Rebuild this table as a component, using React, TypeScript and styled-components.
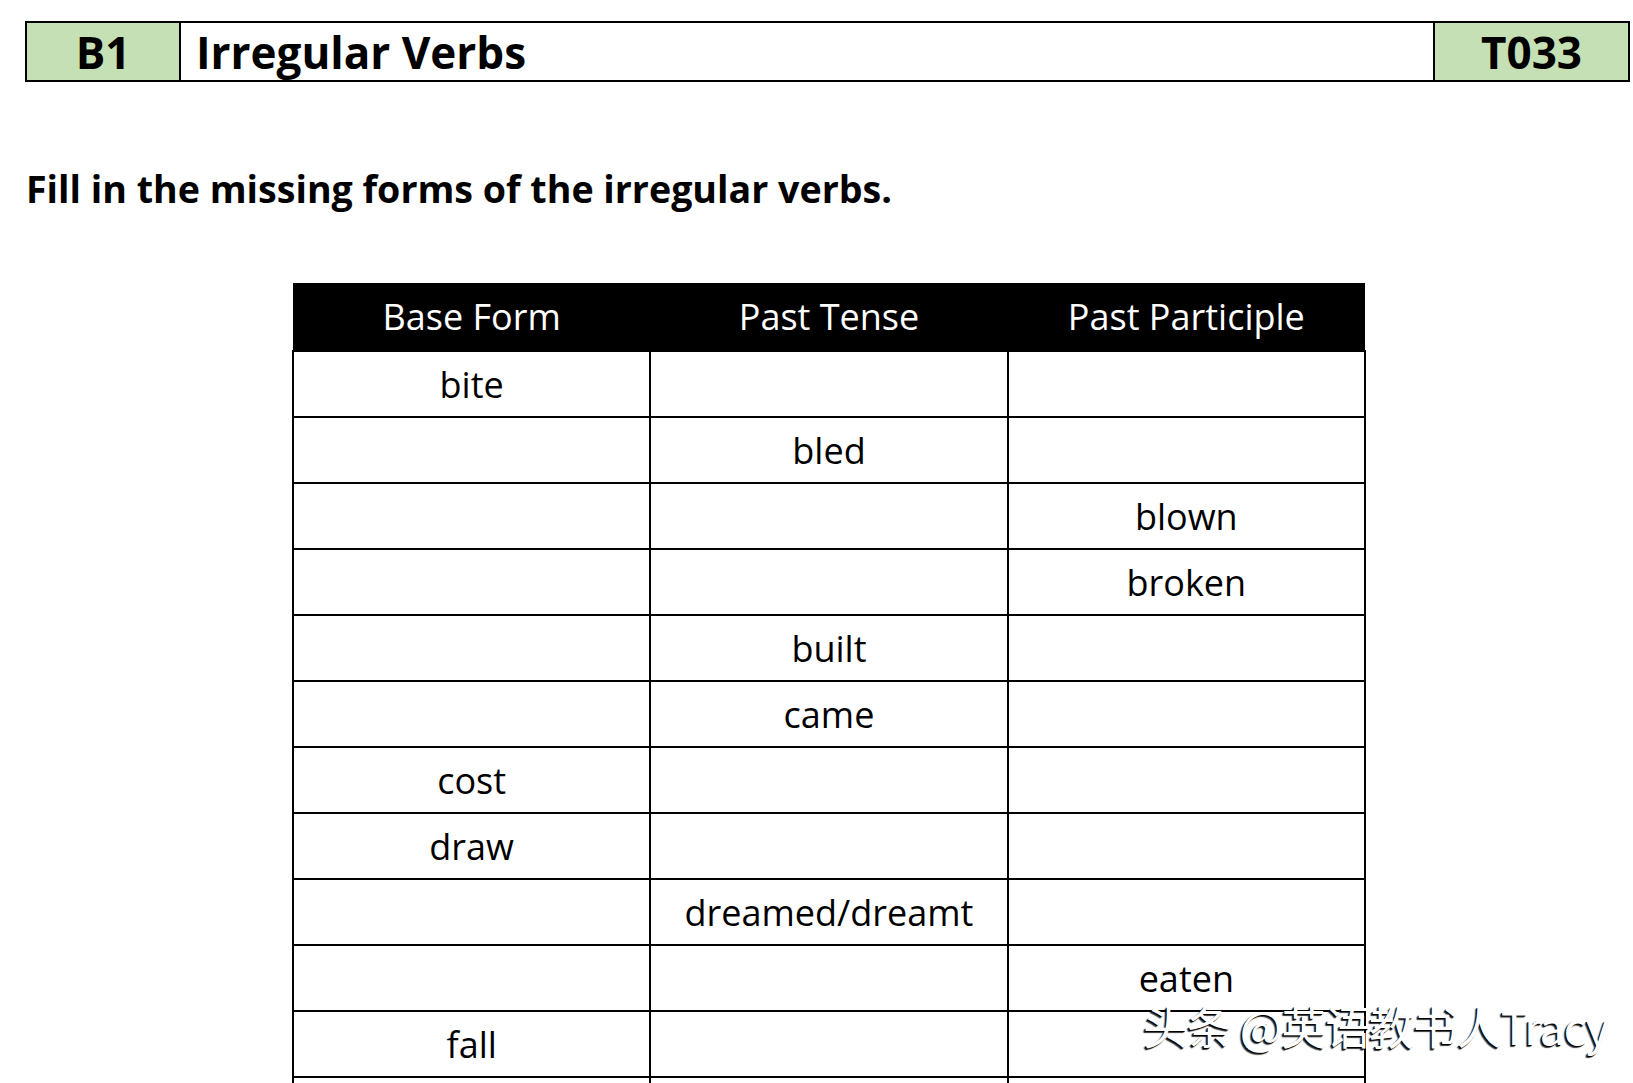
import React from 'react'
import styled, { createGlobalStyle } from 'styled-components'

const GlobalStyle = createGlobalStyle`
  html, body {
    margin: 0;
    padding: 0;
    background: #ffffff;
    overflow: hidden;
  }
  body {
    font-family: 'Open Sans', 'Noto Sans', sans-serif;
    color: #000000;
  }
`

const Page = styled.div`
  position: relative;
  width: 1633px;
  height: 1083px;
  padding: 21px 3px 0 25px;
  box-sizing: border-box;
  overflow: hidden;
`

const TitleBar = styled.div`
  display: grid;
  grid-template-columns: 152px 1fr 195px;
  height: 61px;
  border: 2px solid #000;
  box-sizing: border-box;
`

const TitleCell = styled.div<{ $green?: boolean; $left?: boolean }>`
  display: flex;
  align-items: center;
  justify-content: ${(p) => (p.$left ? 'flex-start' : 'center')};
  padding-left: ${(p) => (p.$left ? '15px' : '0')};
  background: ${(p) => (p.$green ? '#c5e0b4' : '#ffffff')};
  font-weight: 700;
  font-size: 44px;
  line-height: 1;
  & + & {
    border-left: 2px solid #000;
  }
`

const Instruction = styled.h2`
  margin: 85px 0 0 1px;
  font-size: 37.6px;
  font-weight: 700;
  line-height: 44px;
`

const TableWrap = styled.div`
  display: flex;
  justify-content: flex-start;
  margin: 72px 0 0 267px;
`

const Table = styled.table`
  width: 1074px;
  border-collapse: collapse;
  table-layout: fixed;
`

const HeadCell = styled.th`
  height: 67px;
  padding: 0;
  background: #000;
  color: #fff;
  font-weight: 400;
  font-size: 36px;
  text-align: center;
  vertical-align: middle;
`

const Cell = styled.td`
  height: 64px;
  padding: 0;
  border: 2px solid #000;
  font-size: 36px;
  text-align: center;
  vertical-align: middle;
`

const Watermark = styled.div`
  position: absolute;
  left: 1143px;
  top: 1003px;
  font-family: 'Noto Sans CJK SC', 'Liberation Sans', sans-serif;
  font-size: 45px;
  line-height: 1;
  color: #ffffff;
  letter-spacing: -1.1px;
  text-shadow: -1px 1px 0 #000, -2px 2px 1px rgba(0, 0, 0, 0.8);
  white-space: nowrap;
`

const rows: [string, string, string][] = [
  ['bite', '', ''],
  ['', 'bled', ''],
  ['', '', 'blown'],
  ['', '', 'broken'],
  ['', 'built', ''],
  ['', 'came', ''],
  ['cost', '', ''],
  ['draw', '', ''],
  ['', 'dreamed/dreamt', ''],
  ['', '', 'eaten'],
  ['fall', '', ''],
  ['', '', ''],
]

const App: React.FC = () => {
  return (
    <>
      <GlobalStyle />
      <Page>
        <TitleBar>
          <TitleCell $green>B1</TitleCell>
          <TitleCell $left>Irregular Verbs</TitleCell>
          <TitleCell $green>T033</TitleCell>
        </TitleBar>
        <Instruction>Fill in the missing forms of the irregular verbs.</Instruction>
        <TableWrap>
          <Table>
            <thead>
              <tr>
                <HeadCell>Base Form</HeadCell>
                <HeadCell>Past Tense</HeadCell>
                <HeadCell>Past Participle</HeadCell>
              </tr>
            </thead>
            <tbody>
              {rows.map((r, i) => (
                <tr key={i}>
                  {r.map((c, j) => (
                    <Cell key={j}>{c}</Cell>
                  ))}
                </tr>
              ))}
            </tbody>
          </Table>
        </TableWrap>
        <Watermark>头条 @英语教书人Tracy</Watermark>
      </Page>
    </>
  )
}

export default App
